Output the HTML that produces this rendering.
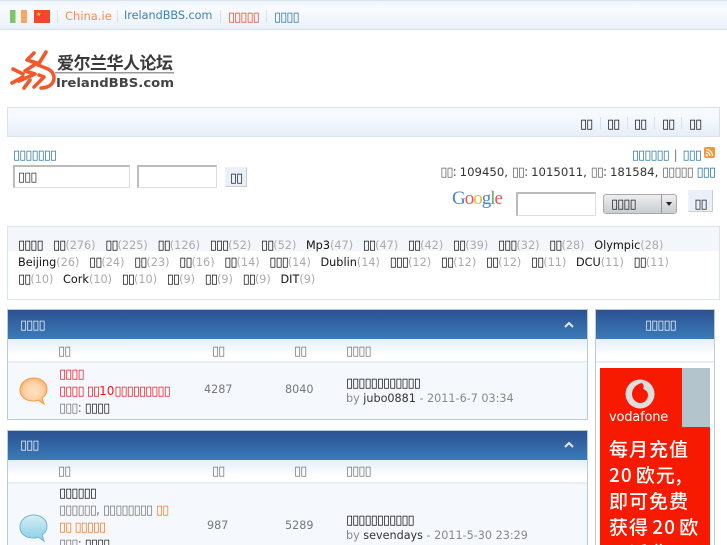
<!DOCTYPE html>
<html lang="zh"><head><meta charset="utf-8"><title>IrelandBBS</title>
<style>
*{box-sizing:border-box}
html,body{margin:0;padding:0;overflow:hidden}
body{width:727px;height:545px;background:#fff;font:12px/14px "DejaVu Sans",sans-serif;color:#444}
#w{position:absolute;left:0;top:0;width:727px;height:545px;overflow:hidden;background:#fff}
.a{position:absolute;white-space:nowrap}
i{font-style:normal;letter-spacing:-1px;font-size:13px}
.k{color:#111}
.g{color:#aaa}
.blue{color:#2c77a8}
.inp{position:absolute;background:#fff;border:1px solid #ddd;border-top:2px solid #bbb;border-left:2px solid #bbb}
.btn{position:absolute;background:#e9f0f9;border:1px solid #eef2f8;border-right-color:#ccc;border-bottom-color:#ccc;color:#222;text-align:center}
.sep{position:absolute;width:1px;background:#d9e2ec}
.sec{position:absolute;border:1px solid #b9cad9;background:#f5f9fe;overflow:hidden}
.hd{position:absolute;left:0;right:0;top:0;height:29px;background:linear-gradient(#2b5192,#3b7bb7);color:#e8f2fb}
.sub{position:absolute;left:0;right:0;top:29px;height:24px;background:linear-gradient(#e6eef7,#fff 70%)}
.line{position:absolute;left:0;right:0;top:47px;height:6px;background:#fff;border-bottom:2px solid #e6edf5}
.t{line-height:15px;font-size:11.25px;word-spacing:1.25px}
.s{font-size:11.2px}
</style></head><body><div id="w">

<div class="a" style="left:0;top:0;width:727px;height:30px;background:linear-gradient(#eef4fb,#f8fbff 30%,#eaf1f8);border-top:1px solid #dbe5f0;border-bottom:1px solid #d5dfeb"></div>
<div class="a" style="left:10px;top:10px;width:17px;height:13px;background:linear-gradient(90deg,#7dc56b 33%,#f5f5f0 33% 66%,#f6a763 66%)"></div>
<div class="a" style="left:34px;top:10px;width:16px;height:13px;background:#f4462c"></div>
<div class="a" style="left:36px;top:11px;color:#fbd34a;font-size:6px;line-height:7px">★</div>
<div class="sep" style="left:57px;top:10px;height:13px"></div>
<div class="sep" style="left:117px;top:10px;height:13px"></div>
<div class="sep" style="left:220px;top:10px;height:13px"></div>
<div class="sep" style="left:266px;top:10px;height:13px"></div>
<div class="a" style="left:65px;top:9px;color:#ff8a45;font-size:11.5px">China.ie</div>
<div class="a" style="left:124px;top:9px;color:#3f80b0;font-size:11.2px">IrelandBBS.com</div>
<div class="a" style="left:228px;top:10px;color:#f5432a"><i>▯▯▯▯▯</i></div>
<div class="a" style="left:274px;top:10px;color:#2f78aa"><i>▯▯▯▯</i></div>

<svg class="a" style="left:10px;top:50px" width="165" height="42" viewBox="0 0 165 42">
<g fill="none" stroke="#f1582c" stroke-width="3.600" stroke-linecap="round" stroke-linejoin="round">
<path d="M24 3 17 10 27 13 15 21 25 24 9 31"/>
<path d="M36 2 28 15 38 19C44 22 45 28 43 32 41 36 36 38 31 38"/>
<path d="M3 19 13 24"/>
<path d="M13 27 2 33"/>
<path d="M29 25 34 27 24 37"/>
<path d="M20 30 14 38"/>
</g>
<text x="47" y="19" font-family="'Noto Sans CJK SC',sans-serif" font-size="17" font-weight="700" fill="#3a3a3a" textLength="116">爱尔兰华人论坛</text>
<rect x="45" y="22" width="119" height="1.5" fill="#999"/>
<text x="46" y="37" font-family="'DejaVu Sans',sans-serif" font-size="12" font-weight="700" fill="#444" textLength="118" lengthAdjust="spacingAndGlyphs">IrelandBBS.com</text>
</svg>

<div class="a" style="left:7px;top:107px;width:713px;height:30px;border:1px solid #d8e2ee;background:linear-gradient(#f6faff 30%,#e6eef7)"></div>
<div class="a k" style="left:580px;top:117px"><i>▯▯</i></div>
<div class="a k" style="left:607px;top:117px"><i>▯▯</i></div>
<div class="a k" style="left:634px;top:117px"><i>▯▯</i></div>
<div class="a k" style="left:662px;top:117px"><i>▯▯</i></div>
<div class="a k" style="left:689px;top:117px"><i>▯▯</i></div>
<div class="sep" style="left:600px;top:117px;height:12px"></div>
<div class="sep" style="left:627px;top:117px;height:12px"></div>
<div class="sep" style="left:654px;top:117px;height:12px"></div>
<div class="sep" style="left:681px;top:117px;height:12px"></div>

<div class="a blue" style="left:13px;top:148px"><i>▯▯▯▯▯▯▯</i></div>
<div class="inp" style="left:13px;top:165px;width:117px;height:23px"></div>
<div class="a" style="left:18px;top:170px;color:#333"><i>▯▯▯</i></div>
<div class="inp" style="left:137px;top:165px;width:80px;height:23px"></div>
<div class="btn" style="left:225px;top:167px;width:22px;height:20px;padding-top:3px"><i>▯▯</i></div>

<div class="a blue" style="right:26px;top:148px;word-spacing:1px"><i>▯▯▯▯▯▯</i> <span style="color:#777">|</span> <i>▯▯▯</i></div>
<div class="a" style="left:704px;top:147px;width:11px;height:11px;background:#f6953a;border-radius:2px"></div>
<svg class="a" style="left:704px;top:147px" width="11" height="11" viewBox="0 0 11 11"><circle cx="2.7" cy="8.3" r="1.2" fill="#fff"/><path d="M2 5a4 4 0 0 1 4 4M2 2.5A6.5 6.5 0 0 1 8.500 9" fill="none" stroke="#fff" stroke-width="1.200"/></svg>
<div class="a" style="right:12px;top:165px;color:#333;font-size:11.7px"><i style="color:#666">▯▯:</i> 109450, <i style="color:#666">▯▯:</i> 1015011, <i style="color:#666">▯▯:</i> 181584, <i style="color:#666">▯▯▯▯▯</i> <i style="color:#1f6ea6">▯▯▯</i></div>

<div class="a" style="left:452px;top:187px;font:19px/24px 'Liberation Serif',serif;letter-spacing:-1px"><span style="color:#4a86c8">G</span><span style="color:#e0584a">o</span><span style="color:#f2b33a">o</span><span style="color:#4a86c8">g</span><span style="color:#5ab06a">l</span><span style="color:#e0584a">e</span></div>
<div class="inp" style="left:516px;top:192px;width:80px;height:24px"></div>
<div class="a" style="left:603px;top:194px;width:74px;height:20px;border:1px solid #aaa;border-radius:3px;background:linear-gradient(#eee,#c9cdd0)"></div>
<div class="a" style="left:661px;top:195px;width:1px;height:18px;background:#999"></div>
<div class="a" style="left:611px;top:197px;color:#222"><i>▯▯▯▯</i></div>
<div class="a" style="left:666px;top:202px;width:0;height:0;border:3.500px solid transparent;border-top:4px solid #222"></div>
<div class="btn" style="left:688px;top:190px;width:25px;height:22px;padding-top:6px"><i>▯▯</i></div>

<div class="a" style="left:7px;top:226px;width:713px;height:74px;border:1px solid #dbe5f0;background:linear-gradient(#f3f7fc 0 24px,#fff 24px)"></div>
<div class="a t k" style="left:18px;top:238px"><i>▯▯▯▯</i></div>
<div class="a t k" style="left:53px;top:238px"><i>▯▯</i><span class="g">(276)</span>&nbsp;&nbsp;<i>▯▯</i><span class="g">(225)</span>&nbsp;&nbsp;<i>▯▯</i><span class="g">(126)</span>&nbsp;&nbsp;<i>▯▯▯</i><span class="g">(52)</span>&nbsp;&nbsp;<i>▯▯</i><span class="g">(52)</span>&nbsp;&nbsp;Mp3<span class="g">(47)</span>&nbsp;&nbsp;<i>▯▯</i><span class="g">(47)</span>&nbsp;&nbsp;<i>▯▯</i><span class="g">(42)</span>&nbsp;&nbsp;<i>▯▯</i><span class="g">(39)</span>&nbsp;&nbsp;<i>▯▯▯</i><span class="g">(32)</span>&nbsp;&nbsp;<i>▯▯</i><span class="g">(28)</span>&nbsp;&nbsp;Olympic<span class="g">(28)</span></div>
<div class="a t k" style="left:18px;top:255px">Beijing<span class="g">(26)</span>&nbsp;&nbsp;<i>▯▯</i><span class="g">(24)</span>&nbsp;&nbsp;<i>▯▯</i><span class="g">(23)</span>&nbsp;&nbsp;<i>▯▯</i><span class="g">(16)</span>&nbsp;&nbsp;<i>▯▯</i><span class="g">(14)</span>&nbsp;&nbsp;<i>▯▯▯</i><span class="g">(14)</span>&nbsp;&nbsp;Dublin<span class="g">(14)</span>&nbsp;&nbsp;<i>▯▯▯</i><span class="g">(12)</span>&nbsp;&nbsp;<i>▯▯</i><span class="g">(12)</span>&nbsp;&nbsp;<i>▯▯</i><span class="g">(12)</span>&nbsp;&nbsp;<i>▯▯</i><span class="g">(11)</span>&nbsp;&nbsp;DCU<span class="g">(11)</span>&nbsp;&nbsp;<i>▯▯</i><span class="g">(11)</span></div>
<div class="a t k" style="left:18px;top:272px"><i>▯▯</i><span class="g">(10)</span>&nbsp;&nbsp;Cork<span class="g">(10)</span>&nbsp;&nbsp;<i>▯▯</i><span class="g">(10)</span>&nbsp;&nbsp;<i>▯▯</i><span class="g">(9)</span>&nbsp;&nbsp;<i>▯▯</i><span class="g">(9)</span>&nbsp;&nbsp;<i>▯▯</i><span class="g">(9)</span>&nbsp;&nbsp;DIT<span class="g">(9)</span></div>

<div class="sec" style="left:7px;top:309px;width:581px;height:111px"><div class="hd"></div><div class="sub"></div><div class="line"></div></div>
<div class="a" style="left:20px;top:318px;color:#e8f2fb"><i>▯▯▯▯</i></div>
<svg class="a" style="left:564px;top:321px" width="10" height="7"><path d="M1 6 5 2 9 6" fill="none" stroke="#dfeaf5" stroke-width="2"/></svg>
<div class="a" style="left:58px;top:344px;color:#777"><i>▯▯</i></div>
<div class="a" style="left:212px;top:344px;color:#777"><i>▯▯</i></div>
<div class="a" style="left:294px;top:344px;color:#777"><i>▯▯</i></div>
<div class="a" style="left:346px;top:344px;color:#777"><i>▯▯▯▯</i></div>
<svg class="a" style="left:19px;top:376px" width="30" height="30"><defs><radialGradient id="o"><stop offset="0" stop-color="#fee3c6"/><stop offset=".7" stop-color="#fdd0a4"/><stop offset="1" stop-color="#fbb675"/></radialGradient><linearGradient id="b" x1="0" y1="0" x2="0" y2="1"><stop offset="0" stop-color="#d8eff6"/><stop offset=".55" stop-color="#a9dcec"/><stop offset="1" stop-color="#8fd0e6"/></linearGradient></defs><path d="M15 2C7 2 1 7 1 14s6 11 13 11c2 0 4 0 5-1l6 4-2-6c3-2 5-5 5-9C28 7 22 2 15 2Z" fill="url(#o)" stroke="#f69a3e" stroke-width="1"/></svg>
<div class="a" style="left:59px;top:367px;color:#f31622"><i>▯▯▯▯</i></div>
<div class="a" style="left:59px;top:384px;color:#f31622"><i>▯▯▯▯ ▯▯</i>10<i>▯▯▯▯▯▯▯▯▯</i></div>
<div class="a" style="left:59px;top:401px;color:#777"><i>▯▯▯:</i> <i style="color:#222">▯▯▯▯</i></div>
<div class="a s" style="left:204px;top:383px;color:#777">4287</div>
<div class="a s" style="left:285px;top:383px;color:#777">8040</div>
<div class="a k" style="left:346px;top:376px"><i>▯▯▯▯▯▯▯▯▯▯▯▯</i></div>
<div class="a s" style="left:346px;top:392px;color:#888">by <span style="color:#333">jubo0881</span> - 2011-6-7 03:34</div>

<div class="sec" style="left:7px;top:430px;width:581px;height:130px"><div class="hd"></div><div class="sub"></div><div class="line"></div></div>
<div class="a" style="left:20px;top:438px;color:#e8f2fb"><i>▯▯▯</i></div>
<svg class="a" style="left:564px;top:441px" width="10" height="7"><path d="M1 6 5 2 9 6" fill="none" stroke="#dfeaf5" stroke-width="2"/></svg>
<div class="a" style="left:58px;top:464px;color:#777"><i>▯▯</i></div>
<div class="a" style="left:212px;top:464px;color:#777"><i>▯▯</i></div>
<div class="a" style="left:294px;top:464px;color:#777"><i>▯▯</i></div>
<div class="a" style="left:346px;top:464px;color:#777"><i>▯▯▯▯</i></div>
<svg class="a" style="left:19px;top:513px" width="30" height="30"><path d="M15 2C7 2 1 7 1 14s6 11 13 11c2 0 4 0 5-1l6 4-2-6c3-2 5-5 5-9C28 7 22 2 15 2Z" fill="url(#b)" stroke="#6fb3d3" stroke-width="1"/></svg>
<div class="a k" style="left:59px;top:486px"><i>▯▯▯▯▯▯</i></div>
<div class="a" style="left:59px;top:503px;color:#777"><i>▯▯▯▯▯▯,</i> <i>▯▯▯▯▯▯▯▯</i> <i style="color:#f97a23">▯▯</i></div>
<div class="a" style="left:59px;top:520px;color:#f97a23"><i>▯▯ ▯▯▯▯▯</i></div>
<div class="a" style="left:59px;top:537px;color:#777"><i>▯▯▯:</i> <i style="color:#222">▯▯▯▯</i></div>
<div class="a s" style="left:207px;top:519px;color:#777">987</div>
<div class="a s" style="left:285px;top:519px;color:#777">5289</div>
<div class="a k" style="left:346px;top:513px"><i>▯▯▯▯▯▯▯▯▯▯▯</i></div>
<div class="a s" style="left:346px;top:529px;color:#888">by <span style="color:#333">sevendays</span> - 2011-5-30 23:29</div>

<div class="sec" style="left:595px;top:309px;width:120px;height:250px;background:#fff"><div class="hd"></div><div class="sub"></div><div class="line"></div></div>
<div class="a" style="left:645px;top:318px;color:#e8f2fb"><i>▯▯▯▯▯</i></div>
<div class="a" style="left:600px;top:368px;width:110px;height:177px;background:#f71a00;overflow:hidden">
<div class="a" style="left:82px;top:0;width:28px;height:59px;background:#b3c4cc"></div>
<svg class="a" style="left:25px;top:11px" width="30" height="30" viewBox="0 0 30 30"><circle cx="15" cy="15" r="14.500" fill="#dedede"/><path d="M17 4C11 5 7 10 7 15c0 5 4 9 8 9 5 0 8-4 8-8 0-3-2-5-5-6 1-2 1-4-1-6Z" fill="#f71a00"/></svg>
<div class="a" style="left:9px;top:42px;color:#fff;font:13px/16px 'DejaVu Sans',sans-serif;letter-spacing:-.2px">vodafone</div>
<div class="a" style="left:9px;top:68px;color:#fff;font:500 19px/26px 'Noto Sans CJK SC',sans-serif;white-space:pre;letter-spacing:1px;word-spacing:-2px">每月充值
20 欧元,
即可免费
获得 20 欧
元话费</div>
</div>
</div></body></html>
